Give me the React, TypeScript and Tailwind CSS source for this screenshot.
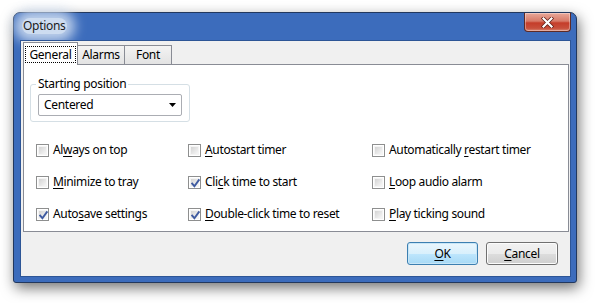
import React from "react";

const font = { fontFamily: '"Noto Sans", "Open Sans", sans-serif' };

function Check({ checked }: { checked: boolean }) {
  return (
    <span className="relative inline-block w-[13px] h-[13px] border border-[#8e8f8f] bg-white shrink-0">
      <span className="absolute inset-[1px] border border-[#f4f4f4] bg-gradient-to-br from-[#d4d4d4] to-[#f7f7f7]" />
      {checked && (
        <svg className="absolute left-[1px] top-[1px]" width="11" height="11" viewBox="0 0 11 11">
          <path d="M2.2 5.6 L4.4 8.2 L8.8 2.2" fill="none" stroke="#3e5aa0" strokeWidth="1.9" strokeLinecap="square" />
        </svg>
      )}
    </span>
  );
}

function Item({ checked, pre, u, post }: { checked: boolean; pre: string; u: string; post: string }) {
  return (
    <div className="flex items-center gap-[4px] h-[16px] text-[12px] tracking-[-0.35px] text-black whitespace-nowrap">
      <Check checked={checked} />
      <span>
        {pre}
        <span className="underline underline-offset-2">{u}</span>
        {post}
      </span>
    </div>
  );
}

export default function App() {
  return (
    <div className="w-[597px] h-[303px] bg-white pt-[12px] pl-[13px]" style={font}>
      <div className="w-[564px] h-[271px] rounded-t-[7px] rounded-b-[3px] border border-[#22385e] shadow-[2px_5px_14px_rgba(0,0,0,0.55)] bg-[#3c6cbc] flex flex-col">
        <div className="h-[27px] flex items-start justify-between shrink-0">
          <div className="ml-[8px] mt-[5px] px-[1px] text-[12px] tracking-[-0.3px] text-[#1b1b1b] leading-[16px] rounded-[8px] bg-[#cddcf0] shadow-[0_0_12px_8px_rgba(205,220,240,0.9)]">Options</div>
          <div className="mr-[5px] w-[47px] h-[19px] rounded-b-[4px] border border-t-0 border-[#5e2a25] bg-[linear-gradient(to_bottom,#e9a89a_0%,#d77a68_45%,#c53d2a_55%,#c8503c_85%,#d98a77_100%)] flex items-center justify-center shadow-[inset_0_0_0_1px_rgba(255,255,255,0.35)]">
            <svg width="13" height="11" viewBox="0 0 13 11">
              <path d="M2.5 1.5 L10.5 9.5 M10.5 1.5 L2.5 9.5" stroke="#5a1a14" strokeWidth="3.6" strokeLinecap="square" />
              <path d="M2.5 1.5 L10.5 9.5 M10.5 1.5 L2.5 9.5" stroke="#ffffff" strokeWidth="2.2" strokeLinecap="square" />
            </svg>
          </div>
        </div>
        <div className="flex-1 mb-[5px] ml-[6px] mr-[5px] border border-[#2d5596] bg-[#f0f0f0] flex flex-col">
          <div className="px-[1px] pt-[1px]">
            <div className="flex items-end h-[22px] pl-[1px]">
              <div className="relative z-10 h-[23px] -mb-[1px] w-[55px] border border-b-0 border-[#898c95] bg-white flex items-center justify-center">
                <span className="px-[3px] leading-[15px] text-[12px] tracking-[-0.3px] border border-dotted border-black">General</span>
              </div>
              <div className="h-[19px] w-[47px] border border-l-0 border-b-0 border-[#898c95] bg-gradient-to-b from-[#f3f3f3] to-[#e3e3e3] flex items-center justify-center text-[12px] tracking-[-0.3px]">Alarms</div>
              <div className="h-[19px] w-[47px] border border-l-0 border-b-0 border-[#898c95] bg-gradient-to-b from-[#f3f3f3] to-[#e3e3e3] flex items-center justify-center text-[12px] tracking-[-0.3px]">Font</div>
            </div>
            <div className="h-[168px] ml-[1px] border border-[#898c95] bg-white pl-[6px] pt-[11px]">
              <fieldset className="w-[160px] border border-[#d5dfe5] rounded-[3px] px-[7px] pb-[5px]">
                <legend className="-ml-[2px] px-[2px] text-[12px] tracking-[-0.3px] leading-[16px]">Starting position</legend>
                <div className="mt-[2px] h-[22px] border border-[#abadb3] rounded-[2px] bg-white flex items-center justify-between pl-[5px] pr-[5px] text-[12px] tracking-[-0.3px]">
                  <span>Centered</span>
                  <svg width="7" height="4" viewBox="0 0 7 4">
                    <path d="M0 0 L7 0 L3.5 4 Z" fill="#000" />
                  </svg>
                </div>
              </fieldset>
              <div className="mt-[20px] ml-[6px] grid grid-cols-[152px_184px_1fr] gap-y-[16px]">
                <Item checked={false} pre="Al" u="w" post="ays on top" />
                <Item checked={false} pre="" u="A" post="utostart timer" />
                <Item checked={false} pre="Automatically " u="r" post="estart timer" />
                <Item checked={false} pre="" u="M" post="inimize to tray" />
                <Item checked={true} pre="Cli" u="c" post="k time to start" />
                <Item checked={false} pre="" u="L" post="oop audio alarm" />
                <Item checked={true} pre="Auto" u="s" post="ave settings" />
                <Item checked={true} pre="" u="D" post="ouble-click time to reset" />
                <Item checked={false} pre="" u="P" post="lay ticking sound" />
              </div>
            </div>
          </div>
          <div className="flex-1 flex items-start justify-end gap-[8px] pt-[10px] pr-[12px]">
            <button className="w-[71px] h-[23px] rounded-[3px] border border-[#3c7fb1] bg-[linear-gradient(to_bottom,#eaf6fd_0%,#d9f0fc_50%,#bee6fd_51%,#a7d9f5_100%)] shadow-[inset_0_0_0_1px_#c8e6f7] text-[12px] tracking-[-0.3px]">
              <span className="underline underline-offset-2">O</span>K
            </button>
            <button className="w-[72px] h-[23px] rounded-[3px] border border-[#707070] bg-[linear-gradient(to_bottom,#f2f2f2_0%,#ebebeb_50%,#dddddd_51%,#cfcfcf_100%)] shadow-[inset_0_0_0_1px_#fcfcfc] text-[12px] tracking-[-0.3px]">
              <span className="underline underline-offset-2">C</span>ancel
            </button>
          </div>
        </div>
      </div>
    </div>
  );
}
